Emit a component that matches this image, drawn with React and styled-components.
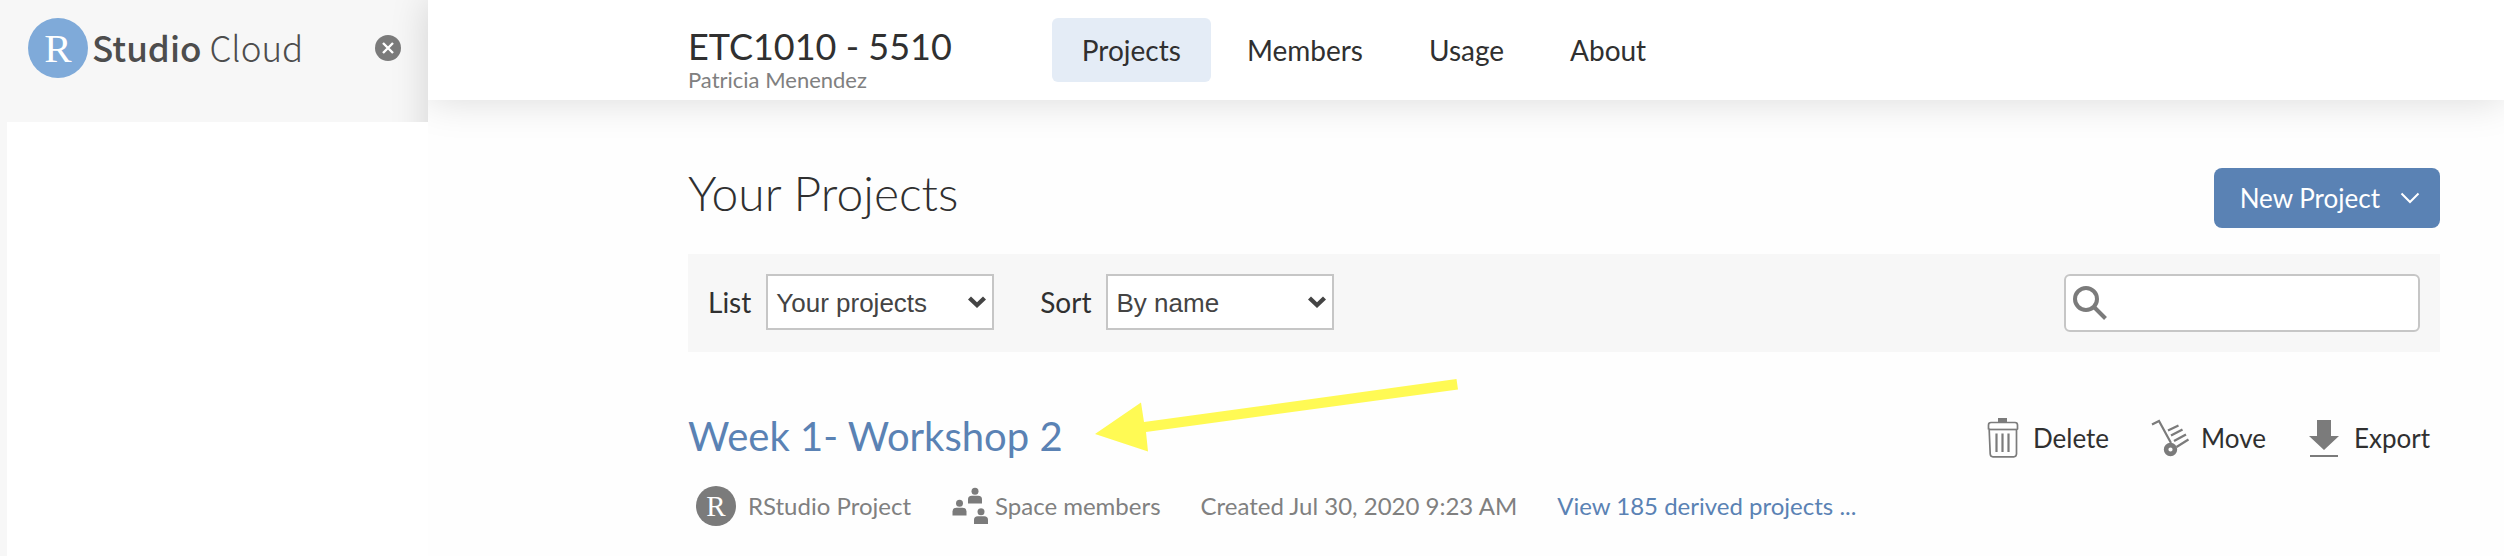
import React from "react";
import styled, { createGlobalStyle } from "styled-components";

const GlobalStyle = createGlobalStyle`
  *, *::before, *::after { box-sizing: border-box; }
  body {
    margin: 0;
    background: #fefefe;
    color: #303030;
    font-family: Lato, sans-serif;
    font-size: 28px;
    line-height: 36px;
  }
  h1, h2, p { margin: 0; }
  a { color: inherit; text-decoration: none; }
  button, select, input { font: inherit; color: inherit; }
  svg { display: block; flex: none; }
`;

const Page = styled.div`
  display: flex;
  min-height: 100vh;
`;

const Sidebar = styled.aside`
  display: flex;
  flex-direction: column;
  flex: none;
  width: 428px;
`;

const Brand = styled.div`
  display: flex;
  align-items: flex-start;
  justify-content: space-between;
  height: 122px;
  padding: 18px 27px 0 28px;
  background: #f7f7f7;
`;

const Logo = styled.a`
  display: flex;
  align-items: flex-start;
  gap: 4px;
  height: 60px;
  color: #4d4d4d;
  font-family: "Noto Sans CJK SC", sans-serif;
  font-size: 35px;
  font-weight: 500;
  line-height: 58px;
`;

const LogoLight = styled.span`
  font-weight: 300;
`;

const RBadge = styled.span`
  display: grid;
  place-items: center;
  flex: none;
  width: ${(p) => p.$size}px;
  height: ${(p) => p.$size}px;
  border-radius: 50%;
  background: ${(p) => p.$color};
  color: #fff;
  font-family: "Liberation Serif", serif;
  font-size: ${(p) => p.$font}px;
  font-weight: 400;
  line-height: 1;
`;

const CloseButton = styled.button`
  display: grid;
  place-items: center;
  width: 26px;
  height: 26px;
  margin-top: 17px;
  padding: 0;
  border: 0;
  border-radius: 50%;
  background: #7b7b7b;
  color: #fff;
`;

const SidebarBody = styled.div`
  position: relative;
  z-index: 2;
  flex: 1;
  border-left: 7px solid #f7f7f7;
  background: #fff;
`;

const Main = styled.div`
  position: relative;
  z-index: 1;
  flex: 1;
  min-width: 0;
  background: #fefefe;
  box-shadow: 0 0 36px rgba(0, 0, 0, 0.15);
`;

const Header = styled.header`
  display: flex;
  gap: 100px;
  height: 100px;
  padding: 0 64px 0 260px;
  background: #fff;
  box-shadow: 0 0 40px rgba(0, 0, 0, 0.15);
  clip-path: inset(0 0 -60px 0);
`;

const Space = styled.div`
  padding-top: 25px;
`;

const SpaceName = styled.p`
  font-size: 36px;
  line-height: 42px;
`;

const SpaceOwner = styled.p`
  color: #808080;
  font-size: 22px;
  line-height: 26px;
`;

const Nav = styled.nav`
  display: flex;
  gap: 6px;
  padding-top: 18px;
`;

const NavLink = styled.a`
  height: 64px;
  padding: 0 30px;
  border-radius: 6px;
  background: ${(p) => (p.$active ? "#e4ecf6" : "transparent")};
  line-height: 64px;
`;

const Content = styled.main`
  padding: 68px 64px 24px 260px;
`;

const TitleRow = styled.div`
  display: flex;
  justify-content: space-between;
  margin-bottom: 26px;
`;

const PageTitle = styled.h1`
  font-size: 48px;
  font-weight: 300;
  line-height: 50px;
`;

const PrimaryButton = styled.button`
  display: flex;
  align-items: center;
  gap: 20px;
  height: 60px;
  padding: 0 20px 0 26px;
  border: 0;
  border-radius: 8px;
  background: #5a82b4;
  color: #fff;
  font-size: 26px;
`;

const Toolbar = styled.div`
  display: flex;
  align-items: flex-start;
  gap: 46px;
  padding: 20px;
  background: #f7f7f7;
`;

const Field = styled.label`
  display: flex;
  align-items: center;
  gap: 15px;
`;

const SelectBox = styled.span`
  position: relative;
  display: block;
  width: 228px;

  svg {
    position: absolute;
    top: 22px;
    right: 8px;
    pointer-events: none;
  }
`;

const Select = styled.select`
  display: block;
  width: 100%;
  height: 56px;
  padding: 2px 32px 0 8px;
  border: 2px solid #c6c6c6;
  border-radius: 0;
  background: #fff;
  color: #444;
  appearance: none;
  font-family: "Liberation Sans", Arial, sans-serif;
  font-size: 26px;
`;

const SearchBox = styled.label`
  display: flex;
  align-items: center;
  gap: 8px;
  width: 356px;
  height: 58px;
  margin-left: auto;
  padding: 0 7px;
  border: 2px solid #c6c6c6;
  border-radius: 6px;
  background: #fff;
`;

const SearchInput = styled.input`
  flex: 1;
  min-width: 0;
  border: 0;
  outline: 0;
  background: transparent;
  font-size: 26px;
`;

const Project = styled.article`
  padding-top: 56px;
`;

const ProjectHead = styled.div`
  display: flex;
  align-items: flex-start;
  justify-content: space-between;
`;

const ProjectTitle = styled.h2`
  position: relative;
  color: #5a82b4;
  font-size: 40px;
  font-weight: 400;
  line-height: 56px;
`;

const Pointer = styled.svg`
  position: absolute;
  top: -30px;
  left: calc(100% + 32px);
  pointer-events: none;
`;

const Actions = styled.div`
  display: flex;
  gap: 42px;
  padding-right: 10px;
`;

const Action = styled.button`
  display: flex;
  align-items: center;
  gap: 12px;
  height: 60px;
  padding: 0;
  border: 0;
  background: transparent;
  font-size: 26px;
`;

const Meta = styled.div`
  display: flex;
  align-items: center;
  gap: 40px;
  margin-top: 18px;
  padding-left: 8px;
  color: #808080;
  font-size: 24px;
  line-height: 38px;
`;

const MetaItem = styled.span`
  display: flex;
  align-items: center;
  gap: ${(p) => p.$gap}px;
`;

const MetaLink = styled.a`
  color: #5a82b4;
`;

const SelectArrow = () => (
  <svg width="18" height="12" viewBox="0 0 18 12" aria-hidden="true">
    <path d="M0 3.4 L3 0.4 L9 6.2 L15 0.4 L18 3.4 L9 12 Z" fill="#444" />
  </svg>
);

const TrashIcon = () => (
  <svg width="34" height="40" viewBox="0 0 34 40" fill="none" stroke="#7b7b7b" aria-hidden="true">
    <rect x="11" y="0" width="9" height="4" fill="#7b7b7b" stroke="none" />
    <path d="M3 11.5 L1.5 11 V7 Q1.5 4.5 4 4.5 H28 Q30.5 4.5 30.5 7 V11 L29.5 12 V36 Q29.2 38.8 26.8 38.8 H6 Q3.4 38.8 3.2 36 L2.2 12" strokeWidth="1.7" />
    <path d="M2 11.5 H30" strokeWidth="1.7" />
    <path d="M9.5 15.5 V34 M15.5 15.5 V34 M21.5 15.5 V34" strokeWidth="2.2" />
  </svg>
);

const DollyIcon = () => (
  <svg width="38" height="38" viewBox="0 0 38 38" fill="none" stroke="#7b7b7b" aria-hidden="true">
    <path d="M1 5.5 L8 2 L20 24" strokeWidth="2.2" />
    <path d="M17 11.5 L27.5 6.5 M20 16.5 L31.5 10.5 M23 22 L35 15.5 M25.5 28 L37.5 20.5" strokeWidth="2.3" />
    <circle cx="19.5" cy="30.5" r="4.4" strokeWidth="4.6" />
  </svg>
);

const ExportIcon = () => (
  <svg width="34" height="38" viewBox="0 0 34 38" fill="#7b7b7b" aria-hidden="true">
    <path d="M9 1 H23 V17 H31 L16 31 L1 17 H9 Z" />
    <rect x="2" y="36" width="28" height="2" />
  </svg>
);

const Person = ({ x, y }) => (
  <g transform={`translate(${x} ${y})`}>
    <circle cx="7" cy="3.2" r="3.5" />
    <path d="M0 15.5 V11.5 Q0 7.8 3.8 7.8 H10.2 Q14 7.8 14 11.5 V15.5 Z" />
  </g>
);

const PeopleIcon = () => (
  <svg width="37" height="38" viewBox="0 0 37 38" fill="#7b7b7b" aria-hidden="true">
    <Person x={17} y={1} />
    <Person x={1.5} y={13} />
    <Person x={23} y={21.5} />
  </svg>
);

export default function App() {
  return (
    <>
      <GlobalStyle />
      <Page>
        <Sidebar>
          <Brand>
            <Logo href="#">
              <RBadge $size={60} $font={41} $color="#7faad9">R</RBadge>
              <span>
                Studio <LogoLight>Cloud</LogoLight>
              </span>
            </Logo>
            <CloseButton type="button" aria-label="Close sidebar">
              <svg width="12" height="12" viewBox="0 0 12 12" stroke="currentColor" strokeWidth="2.4">
                <path d="M1 1 L11 11 M11 1 L1 11" />
              </svg>
            </CloseButton>
          </Brand>
          <SidebarBody />
        </Sidebar>

        <Main>
          <Header>
            <Space>
              <SpaceName>ETC1010 - 5510</SpaceName>
              <SpaceOwner>Patricia Menendez</SpaceOwner>
            </Space>
            <Nav>
              <NavLink href="#" $active>Projects</NavLink>
              <NavLink href="#">Members</NavLink>
              <NavLink href="#">Usage</NavLink>
              <NavLink href="#">About</NavLink>
            </Nav>
          </Header>

          <Content>
            <TitleRow>
              <PageTitle>Your Projects</PageTitle>
              <PrimaryButton type="button">
                New Project
                <svg width="20" height="12" viewBox="0 0 20 12" fill="none" stroke="currentColor" strokeWidth="2">
                  <path d="M1.5 1.5 L10 10 L18.5 1.5" />
                </svg>
              </PrimaryButton>
            </TitleRow>

            <Toolbar>
              <Field>
                List
                <SelectBox>
                  <Select defaultValue="Your projects">
                    <option>Your projects</option>
                  </Select>
                  <SelectArrow />
                </SelectBox>
              </Field>
              <Field>
                Sort
                <SelectBox>
                  <Select defaultValue="By name">
                    <option>By name</option>
                  </Select>
                  <SelectArrow />
                </SelectBox>
              </Field>
              <SearchBox>
                <svg width="34" height="34" viewBox="0 0 34 34" fill="none" stroke="#7b7b7b" strokeWidth="4" aria-hidden="true">
                  <circle cx="13" cy="13" r="11" />
                  <path d="M20.5 20.5 L32.5 32.5" />
                </svg>
                <SearchInput type="search" aria-label="Search projects" />
              </SearchBox>
            </Toolbar>

            <Project>
              <ProjectHead>
                <ProjectTitle>
                  <a href="#">Week 1- Workshop 2</a>
                  <Pointer width="364" height="74" viewBox="0 0 364 74" aria-hidden="true">
                    <path d="M0 56 L46 24.5 L49 44 L361.5 1 L363 11.5 L51 54 L53 73.5 Z" fill="#fffa54" />
                  </Pointer>
                </ProjectTitle>
                <Actions>
                  <Action type="button"><TrashIcon />Delete</Action>
                  <Action type="button"><DollyIcon />Move</Action>
                  <Action type="button"><ExportIcon />Export</Action>
                </Actions>
              </ProjectHead>
              <Meta>
                <MetaItem $gap={12}>
                  <RBadge $size={40} $font={29} $color="#7b7b7b">R</RBadge>
                  RStudio Project
                </MetaItem>
                <MetaItem $gap={7}>
                  <PeopleIcon />
                  Space members
                </MetaItem>
                <MetaItem $gap={0}>Created Jul 30, 2020 9:23 AM</MetaItem>
                <MetaLink href="#">View 185 derived projects ...</MetaLink>
              </Meta>
            </Project>
          </Content>
        </Main>
      </Page>
    </>
  );
}
